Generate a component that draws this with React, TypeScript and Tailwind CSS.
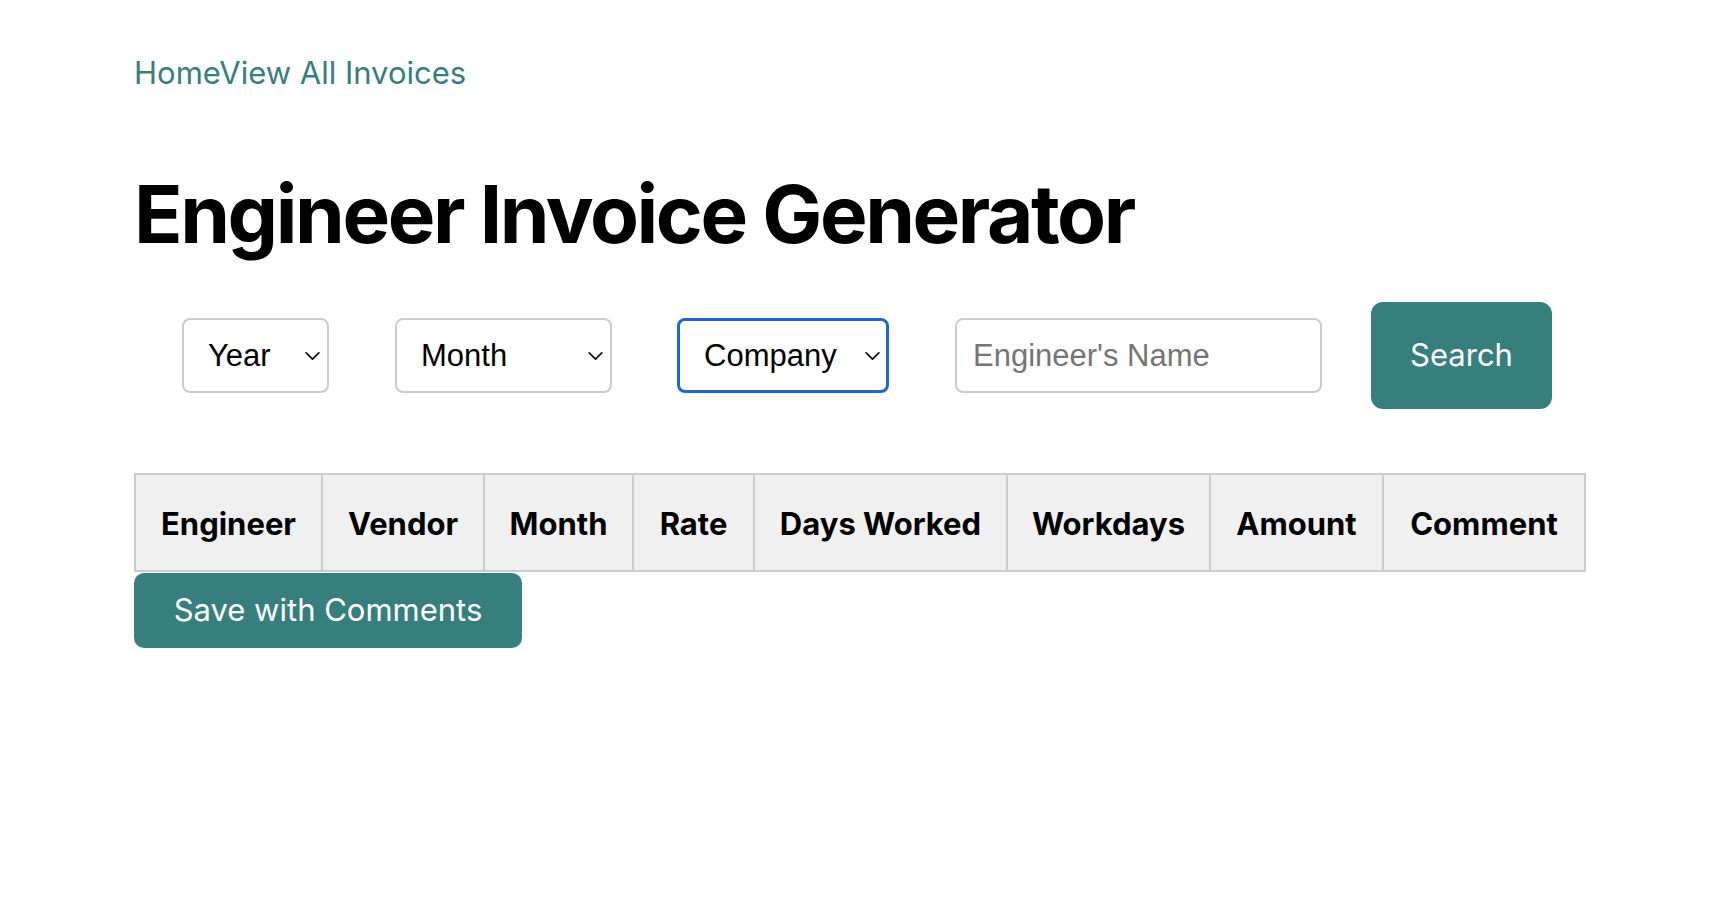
import React from 'react';

function Chevron() {
  return (
    <svg
      className="pointer-events-none absolute right-[9px] top-1/2 -translate-y-1/2"
      width="15"
      height="9"
      viewBox="0 0 15 9"
      fill="none"
    >
      <path d="M1.2 1.4l6.3 6.2 6.3-6.2" stroke="#111" strokeWidth="1.7" strokeLinecap="round" strokeLinejoin="round" />
    </svg>
  );
}

const headers = [
  { label: 'Engineer', w: 'w-[187px]' },
  { label: 'Vendor', w: 'w-[162px]' },
  { label: 'Month', w: 'w-[149px]' },
  { label: 'Rate', w: 'w-[121px]' },
  { label: 'Days Worked', w: 'w-[253px]' },
  { label: 'Workdays', w: 'w-[203px]' },
  { label: 'Amount', w: 'w-[173px]' },
  { label: 'Comment', w: 'w-[202px]' },
];

export default function App() {
  return (
    <div className="min-h-screen bg-white px-[134px] pt-[55px] font-['Inter',sans-serif] text-black">
      {/* Nav links */}
      <nav className="text-[31px] leading-[36px] text-[#377e7f]">
        <a href="#">Home</a>
        <a href="#">View All Invoices</a>
      </nav>

      <h1 className="mt-[74px] text-[80px] font-bold leading-[97px] tracking-[-0.03em]">
        Engineer Invoice Generator
      </h1>

      {/* Filters */}
      <form className="mt-[40px] flex items-center pl-[48px]" onSubmit={(e) => e.preventDefault()}>
        <div className="relative">
          <select className="h-[75px] w-[147px] appearance-none rounded-[8px] border-2 border-[#cccccc] bg-white pl-[24px] pt-[2px] font-['Liberation_Sans',Arial,sans-serif] text-[31px] text-black outline-none">
            <option>Year</option>
          </select>
          <Chevron />
        </div>
        <div className="relative ml-[66px]">
          <select className="h-[75px] w-[217px] appearance-none rounded-[8px] border-2 border-[#cccccc] bg-white pl-[24px] pt-[2px] font-['Liberation_Sans',Arial,sans-serif] text-[31px] text-black outline-none">
            <option>Month</option>
          </select>
          <Chevron />
        </div>
        <div className="relative ml-[65px]">
          <select className="h-[75px] w-[212px] appearance-none rounded-[8px] border-[3px] border-[#2264d1] bg-white pl-[24px] pt-[2px] font-['Liberation_Sans',Arial,sans-serif] text-[31px] text-black outline-none">
            <option>Company</option>
          </select>
          <Chevron />
        </div>
        <input
          type="text"
          placeholder="Engineer's Name"
          className="ml-[66px] h-[75px] w-[367px] rounded-[8px] border-2 border-[#cccccc] bg-white pl-[16px] font-['Liberation_Sans',Arial,sans-serif] text-[31px] text-black outline-none placeholder:text-[#757575]"
        />
        <button
          type="submit"
          className="ml-[49px] h-[107px] w-[181px] rounded-[12px] bg-[#377e7f] text-[31px] text-white"
        >
          Search
        </button>
      </form>

      {/* Invoice table */}
      <table className="mt-[64px] w-full table-fixed border-collapse">
        <thead>
          <tr>
            {headers.map((h) => (
              <th
                key={h.label}
                className={`${h.w} h-[97px] border-2 border-[#cccccc] bg-[#f0f0f0] pt-[4px] text-center text-[31px] font-bold`}
              >
                {h.label}
              </th>
            ))}
          </tr>
        </thead>
        <tbody></tbody>
      </table>

      <button className="mt-[1px] h-[75px] w-[388px] rounded-[10px] bg-[#377e7f] text-[31px] text-white">
        Save with Comments
      </button>
    </div>
  );
}
